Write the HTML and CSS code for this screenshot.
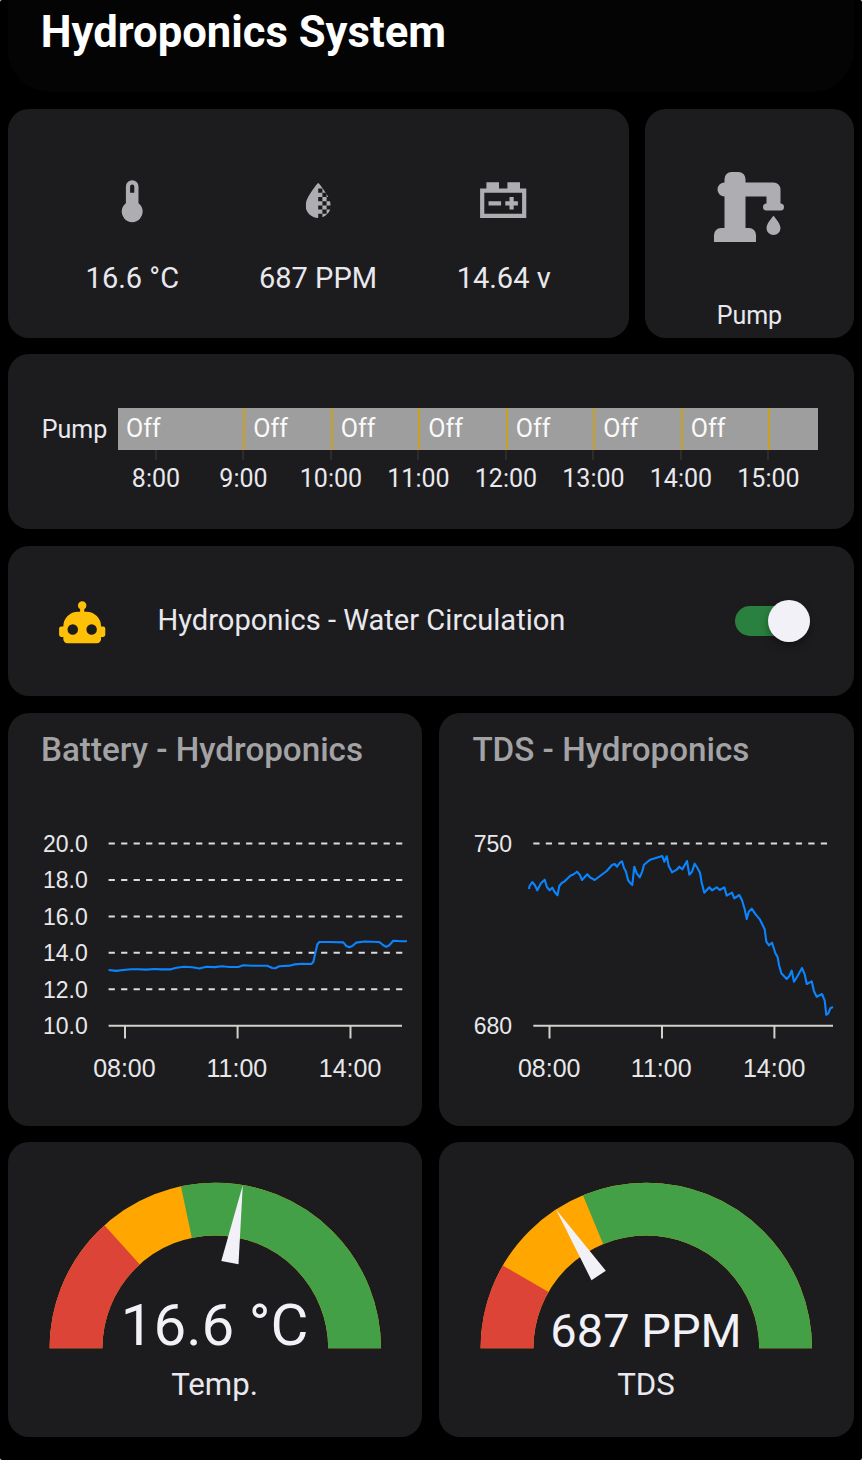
FILE: index.html
```
<!DOCTYPE html>
<html lang="en">
<head>
    <meta charset="UTF-8">
    <meta name="viewport" content="width=device-width, initial-scale=1.0">
    <title>Hydroponics System</title>
    <link rel="stylesheet" href="styles.css">
</head>
<body>
<main class="dashboard">
    <header class="page-header">
        <h1>Hydroponics System</h1>
    </header>

    <section class="row row-status">
        <div class="card glance">
            <div class="entity">
                <svg class="icon" viewBox="0 0 24 24"><path d="M15 13V5A3 3 0 0 0 9 5V13A5 5 0 1 0 15 13M12 4A1 1 0 0 1 13 5V8H11V5A1 1 0 0 1 12 4Z"/></svg>
                <span>16.6 °C</span>
            </div>
            <div class="entity">
                <svg class="icon" viewBox="0 0 24 24">
                    <clipPath id="drop"><path d="M12 3.25C12 3.25 6 10 6 14A6 6 0 0 0 18 14C18 10 12 3.25 12 3.25Z"/></clipPath>
                    <path clip-path="url(#drop)" d="M6 3H12V20H6ZM12 3H16V6H12ZM14 6H16V8H14ZM12 8H14V10H12ZM16 8H18V10H16ZM14 10H16V12H14ZM12 12H14V14H12ZM16 12H18V14H16ZM14 14H16V16H14ZM12 16H14V18H12ZM16 16H18V18H16ZM14 18H16V20H14Z"/>
                </svg>
                <span>687 PPM</span>
            </div>
            <div class="entity">
                <svg class="icon" viewBox="0 0 24 24"><path d="M4 3V6H1V20H23V6H20V3H14V6H10V3H4M3 8H21V18H3V8M15 10V12H13V14H15V16H17V14H19V12H17V10H15M5 12V14H11V12H5Z"/></svg>
                <span>14.64 v</span>
            </div>
        </div>
        <div class="card pump">
            <svg class="pump-icon" viewBox="0 0 24 24"><path d="M19 14.5C19 14.5 21 16.67 21 18A2 2 0 0 1 17 18C17 16.67 19 14.5 19 14.5M5 18V9A2 2 0 0 1 3 7A2 2 0 0 1 5 5V4A2 2 0 0 1 7 2H9A2 2 0 0 1 11 4V5H19A2 2 0 0 1 21 7V11A1 1 0 0 1 22 12A1 1 0 0 1 21 13H17A1 1 0 0 1 16 12A1 1 0 0 1 17 11V9H11V18H12A2 2 0 0 1 14 20V22H2V20A2 2 0 0 1 4 18H5Z"/></svg>
            <span>Pump</span>
        </div>
    </section>

    <section class="card history">
        <div class="history-row">
            <span class="history-label">Pump</span>
            <div class="bar">
                <span class="segment first">Off</span>
                <span class="segment">Off</span>
                <span class="segment">Off</span>
                <span class="segment">Off</span>
                <span class="segment">Off</span>
                <span class="segment">Off</span>
                <span class="segment">Off</span>
                <span class="segment last"></span>
            </div>
        </div>
        <div class="history-axis">
            <span>8:00</span>
            <span>9:00</span>
            <span>10:00</span>
            <span>11:00</span>
            <span>12:00</span>
            <span>13:00</span>
            <span>14:00</span>
            <span>15:00</span>
        </div>
    </section>

    <section class="card automation">
        <svg class="icon robot" viewBox="0 0 24 24"><path d="M12 2A2 2 0 0 1 14 4C14 4.74 13.6 5.39 13 5.73V7H14A7 7 0 0 1 21 14H22A1 1 0 0 1 23 15V18A1 1 0 0 1 22 19H21V20A2 2 0 0 1 19 22H5A2 2 0 0 1 3 20V19H2A1 1 0 0 1 1 18V15A1 1 0 0 1 2 14H3A7 7 0 0 1 10 7H11V5.73C10.4 5.39 10 4.74 10 4A2 2 0 0 1 12 2M7.5 13A2.5 2.5 0 0 0 7.5 18A2.5 2.5 0 0 0 7.5 13M16.5 13A2.5 2.5 0 0 0 16.5 18A2.5 2.5 0 0 0 16.5 13Z"/></svg>
        <span class="automation-name">Hydroponics - Water Circulation</span>
        <div class="switch"><div class="knob"></div></div>
    </section>

    <section class="row row-charts">
        <div class="card chart">
            <h2>Battery - Hydroponics</h2>
            <svg viewBox="7.7 790 414.6 336">
                <g class="grid">
                    <path d="M108.3 843.4H402M108.3 879.9H402M108.3 916.4H402M108.3 952.8H402M108.3 989.3H402"/>
                </g>
                <path class="axis" d="M108.3 1025.8H401.7M124.7 1026V1038.5M237.3 1026V1038.5M350.2 1026V1038.5"/>
                <g class="y-labels">
                    <text x="87.5" y="851.7">20.0</text>
                    <text x="87.5" y="888.2">18.0</text>
                    <text x="87.5" y="924.7">16.0</text>
                    <text x="87.5" y="961.1">14.0</text>
                    <text x="87.5" y="997.6">12.0</text>
                    <text x="87.5" y="1034.1">10.0</text>
                </g>
                <g class="x-labels">
                    <text x="124.1" y="1076.7">08:00</text>
                    <text x="236.6" y="1076.7">11:00</text>
                    <text x="349.8" y="1076.7">14:00</text>
                </g>
                <polyline class="line" points="108.3,970 116,970.9 123,970 131,969.2 138,969.2 146,969.6 154,969 161,969.4 170,969.4 174,968.2 178,967.5 184,966.7 192,967.2 199,968.6 206,966.7 214,967.1 222,966.3 229,967 238,967 243,965.3 252,965.8 267,965.8 272,968 275,968.3 279,966.3 290,965.6 294,964.4 302,963.7 311,964 313,962 317,944.5 319,942 329,942 343,942.4 346,946 349,947.2 352,946 356,942.6 364,941.5 379,942 383,945.3 386,946.9 389,945.3 393,940.8 401,941.2 406.7,941.2"/>
            </svg>
        </div>
        <div class="card chart">
            <h2>TDS - Hydroponics</h2>
            <svg viewBox="439 790 414.6 336">
                <g class="grid">
                    <path d="M533.3 843.4H828"/>
                </g>
                <path class="axis" d="M533.3 1025.8H833M549.5 1026V1038.5M662 1026V1038.5M774.4 1026V1038.5"/>
                <g class="y-labels">
                    <text x="512" y="851.7">750</text>
                    <text x="512" y="1034.1">680</text>
                </g>
                <g class="x-labels">
                    <text x="549.2" y="1076.7">08:00</text>
                    <text x="661.2" y="1076.7">11:00</text>
                    <text x="774.2" y="1076.7">14:00</text>
                </g>
                <polyline class="line" points="529,889 529.5,886 532.3,882 534.7,885 537.3,890.3 541,883.3 544.7,879.7 547,887.3 549.7,890.3 552.3,887.7 554.7,892 557.5,895.3 559.3,886 561.7,883 564.7,881.3 570.3,875.7 573.7,874.3 577,871.7 579.7,874.7 582,880 587.3,874.3 590,877.3 594.7,880 600,876 606.7,871 612,865 614.7,864 617,866.7 620,862.7 622,861.3 624,868 626,871.7 628,880 630,882.7 632.3,885 634.3,866.7 636.7,873.3 639.7,877.3 642.3,871.3 644,864.7 650,859.7 655,858.3 662.3,856 664.3,861.7 666.8,856.3 668.7,866 672,872.3 676.7,869.7 679.3,866.7 682.3,869.3 687,861 689.3,874.7 692,871.7 694.7,863.7 697.3,867.7 700,872.7 701.7,882.7 704.3,892.7 709.3,887.3 712,890.3 716.7,887.3 719.7,890 724.3,887.3 726.7,895.7 732,892.7 734.3,898.3 739.3,895 742,900.3 744.7,909.3 746.7,919 748.7,911.7 751.7,908.7 755,913.7 760,919.7 764.7,929.3 766.3,941.7 769,945.3 772,942.7 775.3,953 777.7,957.3 779,965 781.3,973.3 786.7,979 789.3,976 791.7,970.7 794,981.7 797.7,975.7 802,968 804.7,974.3 806.7,984 811.7,981.3 814,991.3 816.7,996.7 822,994 824.7,1000.7 826.3,1014.8 828.3,1013.3 830.3,1008.3 833,1007"/>
            </svg>
        </div>
    </section>

    <section class="row row-gauges">
        <div class="card gauge">
            <svg viewBox="7.7 1142 414.6 294.7">
                <path class="arc warn" pathLength="180" d="M75.7 1348.3A139.3 139.3 0 0 1 354.3 1348.3"/>
                <path class="arc good" pathLength="180" stroke-dasharray="103 200" stroke-dashoffset="-78" d="M75.7 1348.3A139.3 139.3 0 0 1 354.3 1348.3"/>
                <path class="arc bad" pathLength="180" stroke-dasharray="48 200" d="M75.7 1348.3A139.3 139.3 0 0 1 354.3 1348.3"/>
                <path class="needle" d="M242.5 1185L238.2 1264.2L221 1261Z"/>
                <text class="value temp" x="214.3" y="1345.3">16.6 °C</text>
                <text class="name" x="214.3" y="1395.3">Temp.</text>
            </svg>
        </div>
        <div class="card gauge">
            <svg viewBox="439 1142 414.6 294.7">
                <path class="arc warn" pathLength="180" d="M507 1348.3A139.3 139.3 0 0 1 785.6 1348.3"/>
                <path class="arc good" pathLength="180" stroke-dasharray="114 200" stroke-dashoffset="-67.5" d="M507 1348.3A139.3 139.3 0 0 1 785.6 1348.3"/>
                <path class="arc bad" pathLength="180" stroke-dasharray="30 200" d="M507 1348.3A139.3 139.3 0 0 1 785.6 1348.3"/>
                <path class="needle" d="M556 1209.5L605.8 1270.8L591.5 1280.2Z"/>
                <text class="value tds" x="646" y="1347.3">687 PPM</text>
                <text class="name" x="646" y="1395.3">TDS</text>
            </svg>
        </div>
    </section>
</main>
</body>
</html>
```
FILE: styles.css
```
* {
    box-sizing: border-box;
}
body {
    margin: 0;
    background: #fff;
    font-family: Roboto, "Open Sans", sans-serif;
    color: #e9e8ee;
}
.dashboard {
    height: 1460px;
    padding: 0 8.5px 0 7.5px;
    background: #000;
    border-radius: 2px;
    overflow: hidden;
    display: flex;
    flex-direction: column;
    gap: 16.8px;
}
.page-header {
    height: 91.8px;
    padding-left: 33.3px;
    background: #040404;
    border-radius: 0 0 42px 42px;
}
h1 {
    margin: 0;
    padding-top: 7px;
    font-size: 43.6px;
    line-height: 51px;
    font-weight: 700;
    color: #fff;
}
.row {
    display: grid;
    gap: 16.8px;
}
.row-status {
    grid-template-columns: 621px 1fr;
    height: 229px;
}
.row-charts {
    grid-template-columns: 1fr 1fr;
    height: 412.6px;
}
.row-gauges {
    grid-template-columns: 1fr 1fr;
    height: 294.7px;
}
.card {
    background: #1c1c1e;
    border-radius: 21px;
    overflow: hidden;
}
.icon {
    width: 50.4px;
    height: 50.4px;
    fill: #aeadb2;
    flex: none;
}
.glance {
    display: flex;
    padding: 67.8px 32px 0;
}
.entity {
    flex: 1;
    display: flex;
    flex-direction: column;
    align-items: center;
    gap: 34.4px;
    font-size: 29px;
    line-height: 34px;
}
.pump {
    display: flex;
    flex-direction: column;
    align-items: center;
    padding-top: 56px;
    gap: 52px;
    font-size: 25px;
    line-height: 30px;
}
.pump-icon {
    width: 84px;
    height: 84px;
    fill: #aeadb2;
}

/* pump on/off timeline */
.history {
    height: 175px;
    padding: 53.8px 0 0 34.2px;
    font-size: 25px;
}
.history-row {
    display: flex;
    align-items: center;
}
.history-label {
    width: 76.3px;
}
.bar {
    display: flex;
    width: 700.3px;
    height: 42px;
    background: #9e9e9e;
}
.segment {
    width: 87.5px;
    padding-left: 8px;
    line-height: 42px;
    border-left: 2px solid #c9a020;
    color: #fafafa;
}
.segment.first {
    width: 125.3px;
    border-left: none;
}
.segment.last {
    flex: 1;
}
.history-axis {
    display: grid;
    grid-template-columns: repeat(8, 87.5px);
    margin-left: 70.5px;
    text-align: center;
    line-height: 30px;
}
.history-axis span::before {
    content: "";
    display: block;
    width: 2px;
    height: 10px;
    margin: 0 auto 4px;
    background: #2c2c2e;
}

/* automation toggle */
.automation {
    height: 150px;
    display: flex;
    align-items: center;
    padding: 0 44px 0 49.6px;
}
.robot {
    margin-top: 2px;
    fill: #ffc107;
}
.automation-name {
    margin: -2px 0 0 50px;
    flex: 1;
    font-size: 29.1px;
}
.switch {
    display: flex;
    align-items: center;
    justify-content: flex-end;
    width: 75px;
    height: 29.4px;
    border-radius: 15px;
    background: #2a803f;
}
.knob {
    width: 42px;
    height: 42px;
    flex: none;
    border-radius: 50%;
    background: #f2f1f7;
    box-shadow: 0 4px 8px rgba(0, 0, 0, 0.35);
}

/* charts */
.chart h2 {
    height: 77.1px;
    margin: 0;
    padding: 17.4px 0 0 33.5px;
    font-size: 33.2px;
    line-height: 40px;
    font-weight: 500;
    color: #a3a3a5;
}
.chart svg, .gauge svg {
    display: block;
    width: 100%;
}
.grid {
    fill: none;
    stroke: #dcdcdc;
    stroke-width: 2;
    stroke-dasharray: 6.25 6.25;
}
.axis {
    fill: none;
    stroke: #d0d0cc;
    stroke-width: 2;
}
.y-labels, .x-labels {
    font-family: "Liberation Sans", Arial, sans-serif;
    fill: #e8e8ea;
}
.y-labels {
    font-size: 23px;
    text-anchor: end;
}
.x-labels {
    font-size: 25px;
    text-anchor: middle;
}
.line {
    fill: none;
    stroke: #0a84ff;
    stroke-width: 2.1;
    stroke-linejoin: round;
}

/* gauges */
.arc {
    fill: none;
    stroke-width: 52.8;
}
.warn {
    stroke: #ffa600;
}
.good {
    stroke: #43a047;
}
.bad {
    stroke: #db4437;
}
.needle {
    fill: #f2f1f7;
}
.gauge text {
    fill: #f2f1f7;
    text-anchor: middle;
}
.temp {
    font-size: 58.3px;
}
.tds {
    font-size: 47px;
}
.gauge .name {
    font-size: 31.2px;
    fill: #e9e8ee;
}
```
